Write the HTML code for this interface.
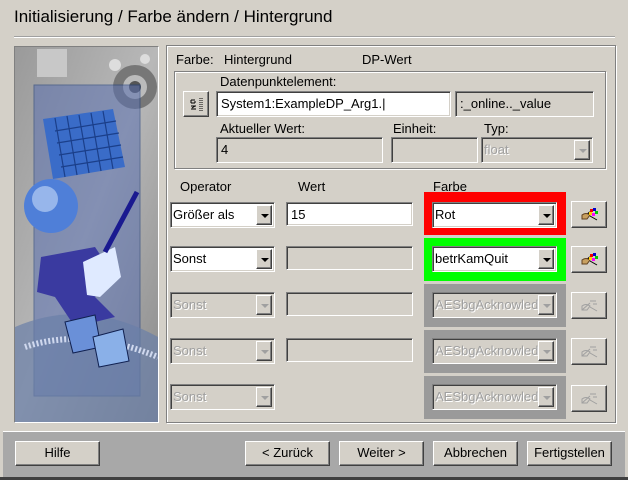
<!DOCTYPE html>
<html><head><meta charset="utf-8"><style>
*{box-sizing:border-box;margin:0;padding:0}
body{width:628px;height:480px;background:#d4d0c8;font-family:"Liberation Sans",Arial,sans-serif;font-size:13px;color:#000;position:relative;overflow:hidden}
.a{position:absolute}
.t{position:absolute;white-space:nowrap;line-height:15px}
.sunk{position:absolute;background:#d4d0c8;border-top:1px solid #808080;border-left:1px solid #808080;border-bottom:1px solid #fff;border-right:1px solid #fff;box-shadow:inset 1px 1px #404040,inset -1px -1px #d4d0c8;padding:3px 0 0 4px;white-space:nowrap;overflow:hidden;line-height:17px}
.white{background:#fff}
.dis{color:#a0a0a0;text-shadow:1px 1px #fff}
.btn{position:absolute;background:#d4d0c8;border-top:1px solid #fff;border-left:1px solid #fff;border-bottom:1px solid #404040;border-right:1px solid #404040;box-shadow:inset -1px -1px #808080;text-align:center;line-height:22px}
.arr{position:absolute;right:2px;top:2px;width:16px;bottom:2px;background:#d4d0c8;border-top:1px solid #fff;border-left:1px solid #fff;border-bottom:1px solid #404040;border-right:1px solid #404040;box-shadow:inset -1px -1px #808080}
.arr:after{content:"";position:absolute;left:4px;top:8px;border-left:4px solid transparent;border-right:4px solid transparent;border-top:4px solid #000}
.arr.d:after{border-top-color:#a0a0a0}
.grp{position:absolute;border:1px solid #808080;box-shadow:1px 1px #fff,inset 1px 1px #fff}
.pal{position:absolute;left:9px;top:5px}
</style></head><body>
<div class="t" style="left:14px;top:7px;font-size:17px;line-height:20px">Initialisierung / Farbe ändern / Hintergrund</div>
<div class="a" style="left:14px;top:36px;width:601px;height:1px;background:#a0a0a0;border-bottom:1px solid #fff;box-sizing:content-box"></div>

<div class="a" style="left:14px;top:46px;width:145px;height:377px;border:1px solid #fff;border-top-color:#808080;border-left-color:#808080">
<svg width="143" height="375" viewBox="0 0 143 375">
<defs><linearGradient id="g" x1="0" y1="0" x2="1" y2="1"><stop offset="0" stop-color="#9a9a9a"/><stop offset=".5" stop-color="#b8b8b8"/><stop offset="1" stop-color="#8a8a8a"/></linearGradient></defs>
<rect width="143" height="375" fill="url(#g)"/>
<rect x="22" y="2" width="30" height="28" fill="#c8c8c8"/>
<circle cx="120" cy="40" r="22" fill="#777"/><circle cx="120" cy="40" r="12" fill="#bbb"/><circle cx="120" cy="40" r="6" fill="#555"/>
<circle cx="100" cy="18" r="6" fill="#ddd"/><circle cx="130" cy="12" r="5" fill="#ddd"/>
<rect x="19" y="38" width="106" height="311" fill="#5a70b0" opacity=".55" stroke="#1a3a7a"/>
<path d="M0 280 Q70 250 143 290 L143 375 L0 375Z" fill="#6a7fa8" opacity=".7"/>
<path d="M10 300 Q70 280 143 310" stroke="#cfd8ee" stroke-width="6" fill="none" stroke-dasharray="2 2"/>
<polygon points="28,72 98,62 110,120 38,132" fill="#3a6cc8"/>
<g stroke="#1b3f8a" stroke-width="1.2"><line x1="40" y1="84" x2="101" y2="74"/><line x1="42" y1="96" x2="104" y2="86"/><line x1="44" y1="108" x2="106" y2="98"/><line x1="46" y1="120" x2="108" y2="110"/><line x1="40" y1="71" x2="50" y2="130"/><line x1="52" y1="69" x2="62" y2="128"/><line x1="64" y1="68" x2="74" y2="126"/><line x1="76" y1="66" x2="86" y2="124"/><line x1="88" y1="64" x2="98" y2="122"/></g>
<circle cx="36" cy="159" r="27" fill="#4f7fd8"/><circle cx="30" cy="152" r="13" fill="#a9c4f0" opacity=".8"/>
<path d="M26 210 L80 200 L100 230 L80 250 L100 270 L60 280 L40 250 L22 245Z" fill="#3a3aa0"/>
<path d="M68 215 L100 200 L106 230 L85 250 L72 248Z" fill="#dfeaff"/>
<line x1="90" y1="205" x2="122" y2="145" stroke="#1a1a90" stroke-width="5"/>
<polygon points="50,275 80,268 86,300 58,306" fill="#6a90d8" stroke="#102050"/>
<polygon points="78,290 108,282 114,314 84,320" fill="#8ab0e8" stroke="#102050"/>
</svg></div>

<div class="grp" style="left:166px;top:45px;width:450px;height:378px"></div>
<div class="t" style="left:176px;top:52px">Farbe:</div>
<div class="t" style="left:224px;top:52px">Hintergrund</div>
<div class="t" style="left:362px;top:52px">DP-Wert</div>
<div class="grp" style="left:174px;top:71px;width:432px;height:98px"></div>
<div class="t" style="left:220px;top:74px">Datenpunktelement:</div>
<div class="btn" style="left:183px;top:91px;width:26px;height:26px"><svg class="a" style="left:5px;top:5px" width="15" height="15" viewBox="0 0 15 15" fill="none" stroke="#000"><path d="M2 3h4M2 3v3M2 6h4M6 6v-2M2 9h5M2 12h5M3 11l3-2"/><path d="M11 1v13" stroke-dasharray="1 1"/><path d="M13 1v13" stroke-dasharray="1 1"/></svg></div>
<div class="sunk white" style="left:216px;top:91px;width:235px;height:26px">System1:ExampleDP_Arg1.|</div>
<div class="sunk" style="left:455px;top:91px;width:139px;height:26px">:_online.._value</div>
<div class="t" style="left:220px;top:121px">Aktueller Wert:</div>
<div class="t" style="left:393px;top:121px">Einheit:</div>
<div class="t" style="left:484px;top:121px">Typ:</div>
<div class="sunk" style="left:216px;top:137px;width:167px;height:26px">4</div>
<div class="sunk" style="left:391px;top:137px;width:87px;height:26px"></div>
<div class="sunk dis" style="left:481px;top:137px;width:112px;height:26px;padding-left:2px">float<div class="arr d"></div></div>

<div class="t" style="left:180px;top:179px">Operator</div>
<div class="t" style="left:298px;top:179px">Wert</div>
<div class="t" style="left:433px;top:179px">Farbe</div>

<div class="sunk white" style="left:170px;top:202px;width:105px;height:26px;padding-left:2px">Größer als<div class="arr"></div></div>
<div class="sunk white" style="left:286px;top:202px;width:127px;height:24px">15</div>
<div class="a" style="left:424px;top:192px;width:142px;height:43px;background:#ff0000"></div>
<div class="sunk white" style="left:432px;top:202px;width:125px;height:26px;padding-left:2px">Rot<div class="arr"></div></div>
<div class="btn" style="left:571px;top:201px;width:36px;height:27px"><svg class="pal" width="18" height="14" viewBox="0 0 18 14"><path d="M1 12 L9 5" stroke="#000" stroke-width="1.5"/><path d="M1 8 Q5 5 9 8 L6 12 L1 12Z" fill="#c8a060" stroke="#604020"/><rect x="9" y="2" width="3" height="3" fill="#e00"/><rect x="12" y="1" width="3" height="3" fill="#00c"/><rect x="14" y="4" width="3" height="3" fill="#0c0"/><rect x="11" y="6" width="3" height="3" fill="#f0f"/><rect x="8" y="5" width="3" height="3" fill="#fc0"/><path d="M9 9 L16 13" stroke="#000"/></svg></div>

<div class="sunk white" style="left:170px;top:246px;width:105px;height:26px;padding-left:2px">Sonst<div class="arr"></div></div>
<div class="sunk" style="left:286px;top:246px;width:127px;height:24px"></div>
<div class="a" style="left:424px;top:238px;width:142px;height:43px;background:#00ff00"></div>
<div class="sunk white" style="left:432px;top:246px;width:125px;height:26px;padding-left:2px">betrKamQuit<div class="arr"></div></div>
<div class="btn" style="left:571px;top:246px;width:36px;height:27px"><svg class="pal" width="18" height="14" viewBox="0 0 18 14"><path d="M1 12 L9 5" stroke="#000" stroke-width="1.5"/><path d="M1 8 Q5 5 9 8 L6 12 L1 12Z" fill="#c8a060" stroke="#604020"/><rect x="9" y="2" width="3" height="3" fill="#e00"/><rect x="12" y="1" width="3" height="3" fill="#00c"/><rect x="14" y="4" width="3" height="3" fill="#0c0"/><rect x="11" y="6" width="3" height="3" fill="#f0f"/><rect x="8" y="5" width="3" height="3" fill="#fc0"/><path d="M9 9 L16 13" stroke="#000"/></svg></div>

<div class="sunk dis" style="left:170px;top:292px;width:105px;height:26px;padding-left:2px">Sonst<div class="arr d"></div></div>
<div class="sunk" style="left:286px;top:292px;width:127px;height:24px"></div>
<div class="a" style="left:424px;top:284px;width:142px;height:43px;background:#9a9a9a"></div>
<div class="sunk dis" style="left:432px;top:292px;width:125px;height:26px;padding-left:2px">AESbgAcknowled<div class="arr d"></div></div>
<div class="btn" style="left:571px;top:292px;width:36px;height:27px"><svg class="pal" width="18" height="14" viewBox="0 0 18 14" fill="none" stroke="#a0a0a0"><path d="M1 12 L9 5"/><path d="M1 8 Q5 5 9 8 L6 12 L1 12Z"/><path d="M9 3h6M12 6h4M9 9 L16 13"/></svg></div>

<div class="sunk dis" style="left:170px;top:338px;width:105px;height:26px;padding-left:2px">Sonst<div class="arr d"></div></div>
<div class="sunk" style="left:286px;top:338px;width:127px;height:24px"></div>
<div class="a" style="left:424px;top:330px;width:142px;height:43px;background:#9a9a9a"></div>
<div class="sunk dis" style="left:432px;top:338px;width:125px;height:26px;padding-left:2px">AESbgAcknowled<div class="arr d"></div></div>
<div class="btn" style="left:571px;top:338px;width:36px;height:27px"><svg class="pal" width="18" height="14" viewBox="0 0 18 14" fill="none" stroke="#a0a0a0"><path d="M1 12 L9 5"/><path d="M1 8 Q5 5 9 8 L6 12 L1 12Z"/><path d="M9 3h6M12 6h4M9 9 L16 13"/></svg></div>

<div class="sunk dis" style="left:170px;top:384px;width:105px;height:26px;padding-left:2px">Sonst<div class="arr d"></div></div>
<div class="a" style="left:424px;top:376px;width:142px;height:43px;background:#9a9a9a"></div>
<div class="sunk dis" style="left:432px;top:384px;width:125px;height:26px;padding-left:2px">AESbgAcknowled<div class="arr d"></div></div>
<div class="btn" style="left:571px;top:385px;width:36px;height:27px"><svg class="pal" width="18" height="14" viewBox="0 0 18 14" fill="none" stroke="#a0a0a0"><path d="M1 12 L9 5"/><path d="M1 8 Q5 5 9 8 L6 12 L1 12Z"/><path d="M9 3h6M12 6h4M9 9 L16 13"/></svg></div>

<div class="a" style="left:3px;top:431px;width:622px;height:46px;background:#a8a8a8;border-top:1px solid #fff"></div>
<div class="a" style="left:0;top:477px;width:628px;height:3px;background:#404040"></div>
<div class="btn" style="left:15px;top:441px;width:85px;height:25px">Hilfe</div>
<div class="btn" style="left:245px;top:441px;width:85px;height:25px">&lt; Zurück</div>
<div class="btn" style="left:339px;top:441px;width:85px;height:25px">Weiter &gt;</div>
<div class="btn" style="left:433px;top:441px;width:85px;height:25px">Abbrechen</div>
<div class="btn" style="left:527px;top:441px;width:85px;height:25px">Fertigstellen</div>
</body></html>
